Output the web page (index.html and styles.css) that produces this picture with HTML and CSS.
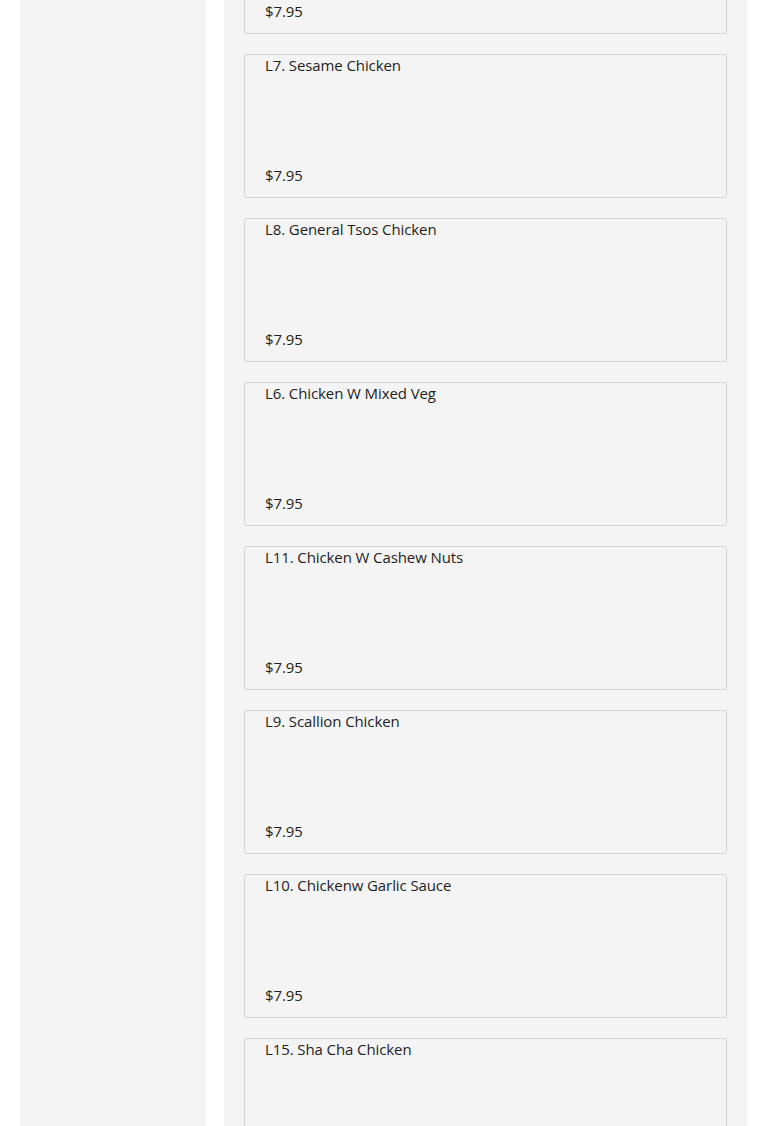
FILE: index.html
```html
<!DOCTYPE html>
<html>
<head>
<meta charset="utf-8">
<link rel="stylesheet" href="styles.css">
</head>
<body>
<div class="page">
  <aside class="sidebar"></aside>
  <main class="menu">
    <div class="card"><div class="name"></div><div class="price">$7.95</div></div>
    <div class="card"><div class="name">L7. Sesame Chicken</div><div class="price">$7.95</div></div>
    <div class="card"><div class="name">L8. General Tsos Chicken</div><div class="price">$7.95</div></div>
    <div class="card"><div class="name">L6. Chicken W Mixed Veg</div><div class="price">$7.95</div></div>
    <div class="card"><div class="name">L11. Chicken W Cashew Nuts</div><div class="price">$7.95</div></div>
    <div class="card"><div class="name">L9. Scallion Chicken</div><div class="price">$7.95</div></div>
    <div class="card"><div class="name">L10. Chickenw Garlic Sauce</div><div class="price">$7.95</div></div>
    <div class="card"><div class="name">L15. Sha Cha Chicken</div><div class="price"></div></div>
  </main>
</div>
</body>
</html>
```

FILE: styles.css
```css
html, body {
  margin: 0;
  padding: 0;
  background: #ffffff;
  height: 100%;
  overflow: hidden;
}
body {
  font-family: "Open Sans", "Noto Sans", sans-serif;
  color: #1e1e1e;
}
.page {
  display: flex;
  gap: 18px;
  padding: 0 18px 0 20px;
  margin-top: -130px;
  min-height: 1400px;
}
.sidebar {
  width: 186px;
  flex: none;
  background: #f4f4f4;
}
.menu {
  flex: 1;
  background: #f4f4f4;
  padding: 20px 20px;
  display: flex;
  flex-direction: column;
  gap: 20px;
}
.card {
  box-sizing: border-box;
  height: 144px;
  border: 1px solid #d2d2d2;
  border-radius: 3px;
  background: #f4f4f4;
  padding: 0 20px 12px;
  display: flex;
  flex-direction: column;
  justify-content: space-between;
  font-size: 15px;
  line-height: 20px;
  letter-spacing: -0.1px;
}
.name, .price {
  min-height: 20px;
}
```
